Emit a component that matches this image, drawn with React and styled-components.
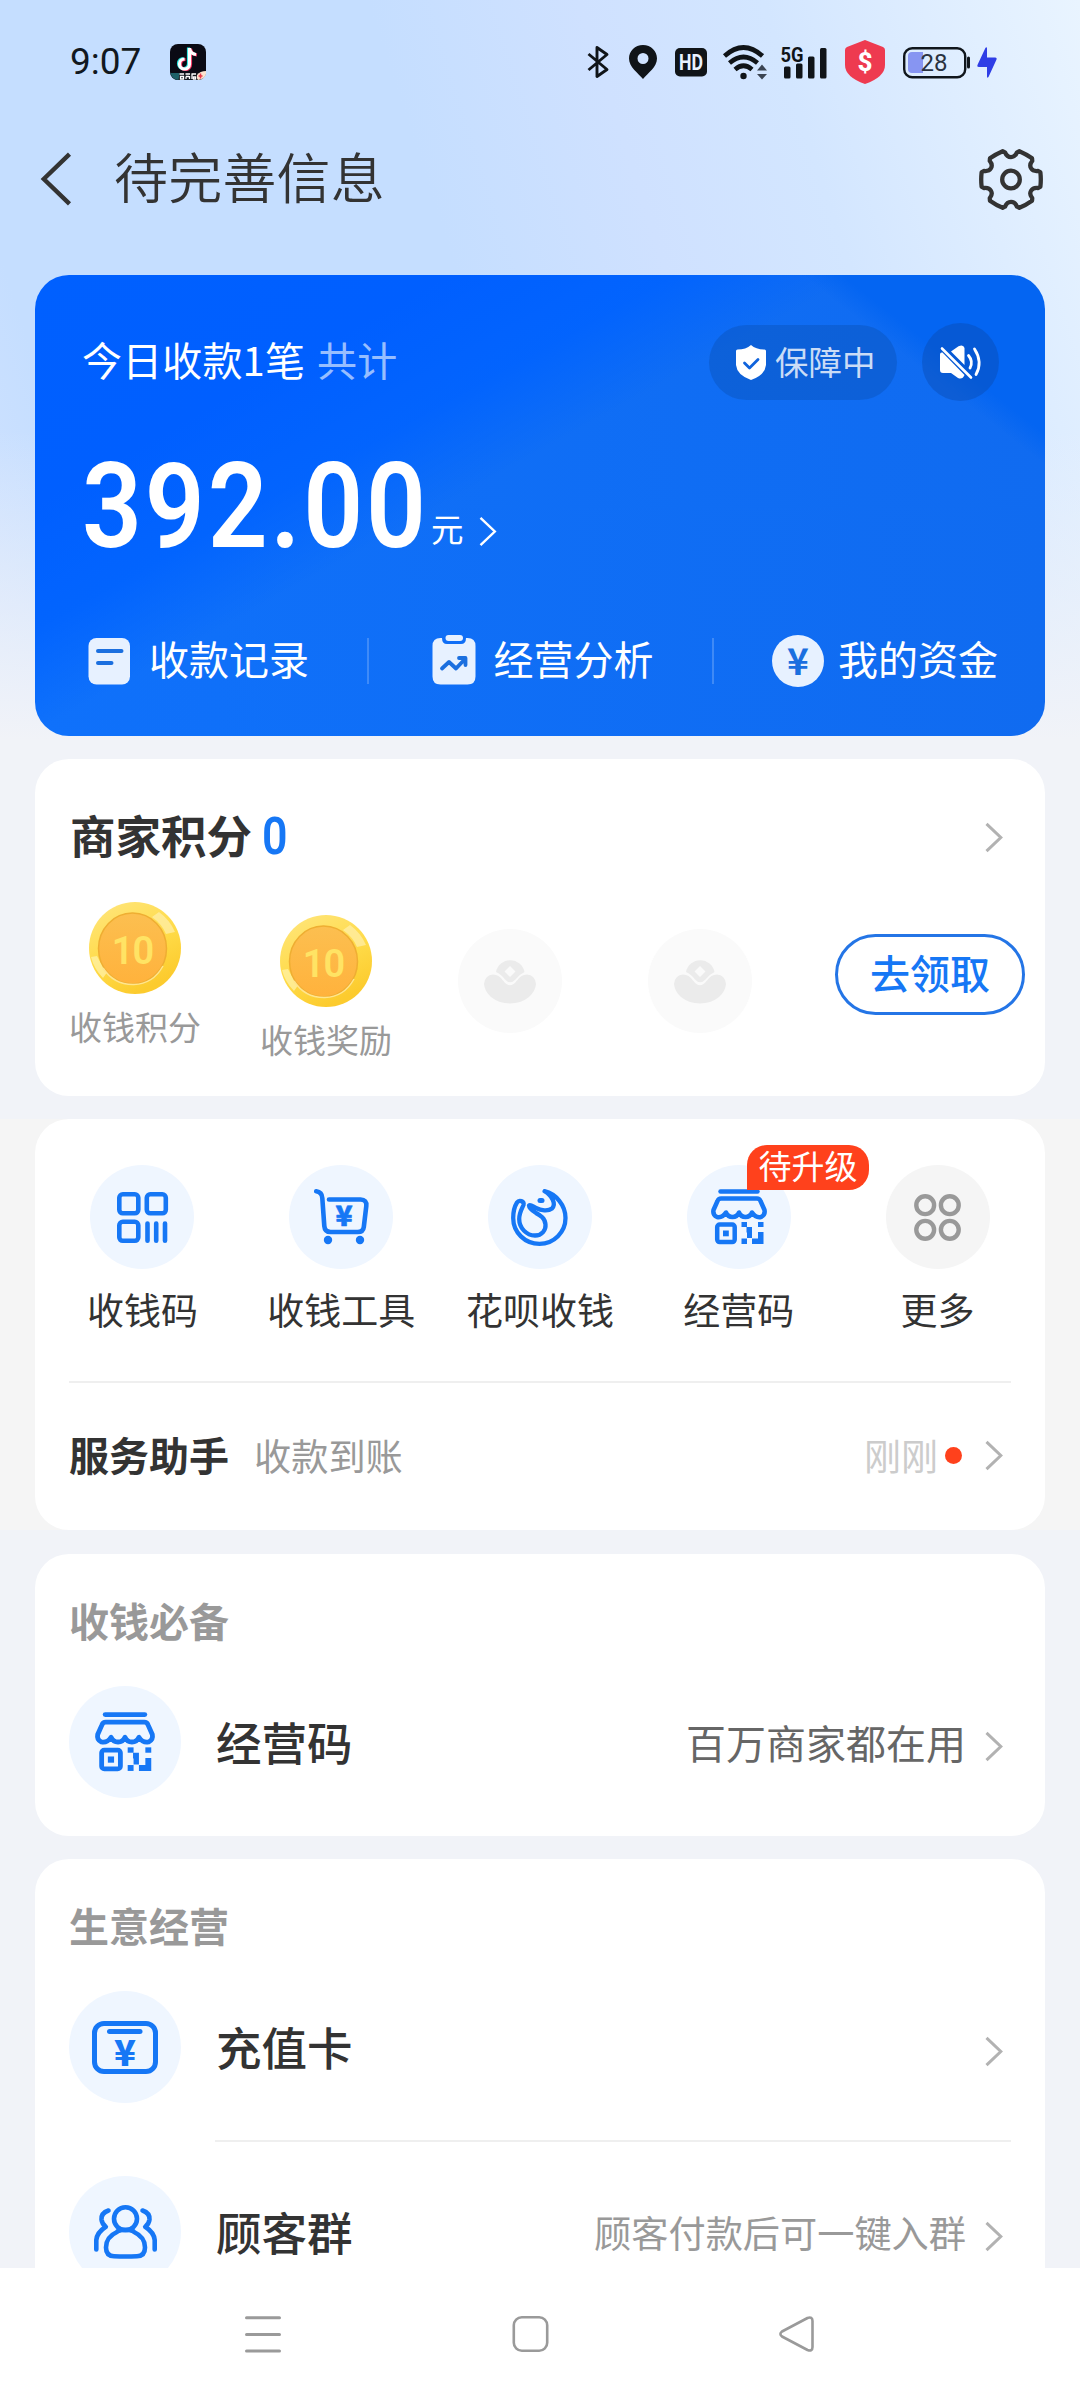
import React from "react";
import styled, { createGlobalStyle } from "styled-components";

const GlobalStyle = createGlobalStyle`
  * { box-sizing: border-box; }
  body { margin: 0; background: #fff; }
  svg { display: block; flex: none; overflow: visible; }
`;

const CJK = '"Noto Sans CJK SC", "Noto Sans", sans-serif';
const LATIN = 'Roboto, "Liberation Sans", sans-serif';
const BLUE = "#1677f5";

/* ---------- page frame ---------- */

const Screen = styled.div`
  width: 1080px;
  height: 2400px;
  display: flex;
  flex-direction: column;
  overflow: hidden;
  font-family: ${CJK};
  color: #333;
  white-space: nowrap;
`;

const Body = styled.main`
  height: 2268px;
  overflow: hidden;
  background:
    linear-gradient(180deg, rgba(241, 243, 248, 0) 430px, #f1f3f8 740px),
    linear-gradient(72deg, #d2e3ff 0, #c5deff 12%, #c5deff 46%, #cfe1ff 62%, #d3e6ff 76%, #e9f4ff 100%) 0 0 / 100% 740px no-repeat,
    #f1f3f8;
`;

const StatusBar = styled.div`
  height: 124px;
  padding: 0 83px 0 70px;
  display: flex;
  align-items: center;
`;

const Clock = styled.span`
  width: 100px;
  font: 400 37px/40px ${LATIN};
  color: #111820;
`;

const StatusIcons = styled.div`
  margin-left: auto;
  display: flex;
  align-items: center;
`;

const StatusItem = styled.span`
  display: flex;
  margin-left: ${(p) => p.$gap}px;
`;

const Header = styled.header`
  height: 110px;
  margin-bottom: 41px;
  padding: 0 37px 0 41px;
  display: flex;
  align-items: center;
`;

const Title = styled.h1`
  flex: 1;
  margin: 0 0 7px 43px;
  font-weight: 350;
  font-size: 54px;
  line-height: 56px;
  letter-spacing: 0.2px;
`;

/* ---------- cards ---------- */

const Section = styled.section`
  padding: 0 35px;
  margin-bottom: ${(p) => p.$gap || 23}px;
  background: ${(p) => (p.$plain ? "#f5f5f5" : "transparent")};
`;

const Card = styled.div`
  height: ${(p) => p.$h}px;
  border-radius: 34px;
  background: #fff;
  padding: ${(p) => p.$pad || "0"};
`;

const HeroCard = styled(Card)`
  padding: 48px 46px 0 47px;
  color: #fff;
  background:
    linear-gradient(218deg, #0465f2 0, #0465f2 125px, rgba(4, 101, 242, 0) 150px),
    linear-gradient(151deg, #0060ff 0, #005fff 200px, rgba(0, 98, 255, 0.85) 310px, rgba(10, 105, 250, 0) 400px),
    linear-gradient(90deg, #0f71fb, #106bf0);
`;

const HeroTop = styled.div`
  height: 78px;
  display: flex;
  align-items: center;
`;

const TodayText = styled.div`
  flex: 1;
  font-size: 40px;
  line-height: 40px;
  padding-bottom: 6px;
  letter-spacing: 0.15px;
  span { color: rgba(255, 255, 255, 0.6); margin-left: 12px; }
`;

const Guarantee = styled.div`
  width: 188px;
  height: 75px;
  border-radius: 38px;
  padding-left: 27px;
  display: flex;
  align-items: center;
  gap: 9px;
  background: rgba(10, 80, 180, 0.42);
  font-size: 33.5px;
  line-height: 34px;
  color: rgba(255, 255, 255, 0.78);
  span { margin-bottom: 2px; }
`;

const SoundButton = styled.div`
  width: 77px;
  height: 78px;
  margin-left: 25px;
  border-radius: 50%;
  display: flex;
  align-items: center;
  justify-content: center;
  background: rgba(10, 75, 175, 0.42);
`;

const AmountRow = styled.div`
  height: 84px;
  margin-top: 64px;
  display: flex;
`;

const Amount = styled.span`
  width: 349px;
  font: 600 118px/84px ${LATIN};
  letter-spacing: 3.2px;
  transform: scaleX(0.89);
  transform-origin: 0 50%;
`;

const Unit = styled.span`
  font-size: 32.5px;
  line-height: 32px;
  margin: 47px 15px 0 0;
`;

const ChevronSlot = styled.span`
  display: flex;
  margin-top: ${(p) => p.$top || 0}px;
  margin-left: ${(p) => p.$left || 0}px;
`;

const HeroLinks = styled.div`
  height: 52px;
  margin: 86px 1px 0 1px;
  display: flex;
  align-items: center;
  justify-content: space-between;
`;

const HeroLink = styled.div`
  display: flex;
  align-items: center;
  gap: 14px;
  font-size: 40px;
  line-height: 40px;
  span { margin-bottom: 6px; }
`;

const HeroDivider = styled.i`
  width: 2px;
  height: 46px;
  background: rgba(255, 255, 255, 0.2);
`;

/* ---------- points ---------- */

const PointsHead = styled.div`
  height: 46px;
  display: flex;
  align-items: center;
  padding-right: 22px;
`;

const PointsTitle = styled.h2`
  margin: 0 0 2px;
  font-size: 45.500px;
  line-height: 46px;
  font-weight: 700;
`;

const PointsValue = styled.span`
  flex: 1;
  margin: 4px 0 0 10px;
  font: 600 52px/46px ${LATIN};
  color: ${BLUE};
  transform: scaleX(0.86);
  transform-origin: 0 50%;
`;

const PointsRow = styled.div`
  margin-top: 44px;
  display: flex;
  align-items: flex-start;
`;

const CoinColumn = styled.div`
  width: 132px;
  margin: ${(p) => p.$top}px 60px 0 -1px;
  display: flex;
  flex-direction: column;
  align-items: center;
  gap: 15px;
  font-size: 33px;
  line-height: 34px;
  color: #999;
`;

const EmptySlot = styled.div`
  width: 104px;
  height: 104px;
  margin: 27px 0 0 ${(p) => p.$left}px;
  border-radius: 50%;
  background: #fafafa;
  display: flex;
  align-items: center;
  justify-content: center;
`;

const ClaimButton = styled.button`
  width: 190px;
  height: 81px;
  margin: 32px 0 0 83px;
  padding: 0 0 5px;
  border: 3px solid #2475e6;
  border-radius: 41px;
  background: #fff;
  color: ${BLUE};
  font: 500 40px/40px ${CJK};
`;

/* ---------- shortcuts ---------- */

const Shortcuts = styled.div`
  height: 262px;
  padding: 46px 8px 0 8px;
  display: grid;
  grid-template-columns: repeat(5, 1fr);
`;

const Shortcut = styled.div`
  position: relative;
  display: flex;
  flex-direction: column;
  align-items: center;
  gap: 21px;
  font-size: 37px;
  line-height: 38px;
`;

const Disc = styled.div`
  width: ${(p) => p.$size}px;
  height: ${(p) => p.$size}px;
  flex: none;
  border-radius: 50%;
  background: ${(p) => (p.$gray ? "#f5f5f5" : "#eff6ff")};
  display: flex;
  align-items: center;
  justify-content: center;
`;

const Badge = styled.span`
  position: absolute;
  left: 107.500px;
  top: -20px;
  width: 122px;
  height: 45px;
  border-radius: 20px 20px 20px 0;
  background: #ff411c;
  color: #fff;
  font-size: 33px;
  line-height: 41px;
  text-align: center;
`;

const Rule = styled.hr`
  height: 2px;
  border: 0;
  background: #efefef;
  margin: ${(p) => p.$m};
`;

const Assistant = styled.div`
  height: 145px;
  padding: 0 42px 0 34px;
  display: flex;
  align-items: center;
  line-height: 40px;
  b { font-size: 40px; padding-bottom: 3px; }
  em { flex: 1; font-style: normal; font-size: 37.200px; color: #999; margin-left: 25px; padding-bottom: 1px; }
  time { font-size: 37px; color: #ccc; padding-bottom: 1px; }
`;

const RedDot = styled.i`
  width: 17px;
  height: 17px;
  margin: 0 23px 0 7px;
  border-radius: 50%;
  background: #ff411c;
`;

/* ---------- lists ---------- */

const ListHeading = styled.h3`
  margin: 0 0 46px;
  font-size: 40px;
  line-height: 40px;
  font-weight: 700;
  color: #999;
`;

const ListRow = styled.div`
  height: 112px;
  padding-right: 7px;
  display: flex;
  align-items: center;
`;

const RowName = styled.span`
  flex: 1;
  margin: 0 0 3px 35px;
  font-size: 45.500px;
  line-height: 46px;
  font-weight: 500;
`;

const RowNote = styled.span`
  font-size: ${(p) => p.$size}px;
  line-height: 40px;
  color: ${(p) => p.$color};
`;

const NavBar = styled.nav`
  height: 132px;
  padding: 0 266px 0 245px;
  display: flex;
  align-items: center;
  justify-content: space-between;
  background: #fff;
`;

/* ---------- icons ---------- */

const Chevron = ({ color = "#b2b2b2", weight = 3 }) => (
  <svg width="18" height="29" viewBox="0 0 18 29" fill="none" stroke={color} strokeWidth={weight}>
    <path d="M1.500 0.800 15.800 14.500 1.500 28.200" />
  </svg>
);

const BackIcon = () => (
  <svg width="30" height="52" viewBox="0 0 30 52" fill="none" stroke="#333" strokeWidth="4.400">
    <path d="M28.500 1.200 2.800 26 28.500 50.800" />
  </svg>
);

const gearPath = () => {
  const point = (deg, r) => {
    const a = (deg * Math.PI) / 180;
    return `${(32 + r * Math.cos(a)).toFixed(2)} ${(30.5 + r * 0.97 * Math.sin(a)).toFixed(2)}`;
  };
  let d = "";
  for (let k = 0; k < 6; k++) {
    const c = 60 * k;
    d += `${k ? "L" : "M"}${point(c - 14, 30.3)} Q${point(c, 30.2)} ${point(c + 14, 30.3)} `;
    d += `L${point(c + 18, 28.6)} C${point(c + 21, 21.8)} ${point(c + 39, 21.8)} ${point(c + 42, 28.6)} `;
  }
  return d + "Z";
};

const GearIcon = () => (
  <svg width="64" height="61" viewBox="0 0 64 61" fill="none" stroke="#333" strokeWidth="4.300" strokeLinejoin="round">
    <path d={gearPath()} />
    <circle cx="32" cy="30.500" r="8.800" />
  </svg>
);

const MusicAppIcon = () => (
  <svg width="36" height="36" viewBox="0 0 36 36">
    <rect width="36" height="36" rx="8" fill="#0a0a14" />
    <g fill="none" strokeWidth="3.200">
      <path d="M18.500 3.500V19.500a5 5 0 1 1-5-5M18.500 4c.6 3.800 3 5.500 6.500 6" stroke="#25e5e0" />
      <path d="M20.500 4.500V20.500a5 5 0 1 1-5-5M20.500 5c.6 3.800 3 5.500 6.500 6" stroke="#f5305e" />
      <path d="M19.500 4V20a5 5 0 1 1-5-5M19.500 4.500c.6 3.800 3 5.500 6.500 6" stroke="#fff" />
    </g>
    <path d="M1 29h33.500Q34 34 29 36H8Q2 35 1 29Z" fill="#15191f" />
    <path d="M.5 29h9l-1 7Q1.500 35 .5 29Z" fill="#1d6068" />
    <path d="M27 31q3-4 9-4v3q-1 5-8 6-2-2-1-5Z" fill="#fde3cf" />
    <path d="M30.500 29.500v5M28.500 32h4" stroke="#e8374a" strokeWidth="1.500" />
    <path d="M9.500 30h4.500M10.500 32.500v2.500h3v-2.500zM15.500 30h4.500M16 32.500v2.500M19.500 32v3M16 32.500h3M21.500 30h4.500M22 30v5M23.500 33h2v2h-2z" fill="none" stroke="#fff" strokeWidth="1.300" />
  </svg>
);

const BluetoothIcon = () => (
  <svg width="22" height="34" viewBox="0 0 22 34" fill="none" stroke="#101418" strokeWidth="2.900">
    <path d="M1.500 9 20 24.500 10 31.500V2.500l10 7L1.500 25" strokeLinejoin="round" />
  </svg>
);

const PinIcon = () => (
  <svg width="28" height="34" viewBox="0 0 28 34">
    <path fillRule="evenodd" fill="#101418" d="M14 0C6 0 0 6 0 13.500 0 22 9 28 14 34 19 28 28 22 28 13.500 28 6 22 0 14 0Zm0 8a5.500 5.500 0 1 1 0 11 5.500 5.500 0 0 1 0-11Z" />
  </svg>
);

const HdIcon = () => (
  <svg width="32" height="29" viewBox="0 0 32 29">
    <rect width="32" height="28.500" rx="5" fill="#101418" />
    <text x="16" y="22" textAnchor="middle" fill="#e8f2ff" fontFamily="Roboto" fontWeight="700" fontSize="22" textLength="24" lengthAdjust="spacingAndGlyphs">HD</text>
  </svg>
);

const WifiIcon = () => (
  <svg width="44" height="35" viewBox="0 0 44 35" fill="none" stroke="#101418" strokeWidth="4.600">
    <path d="M1.500 11Q20.500-6 39.500 11M6.500 18Q20.500 6 34.500 18M12 24.500Q20.500 17 29 24.500" />
    <circle cx="20.500" cy="31" r="3.200" fill="#101418" stroke="none" />
    <path d="M34 25.500l5-6 5 6zM34 29l5 5.500 5-5.500z" fill="#3b4452" stroke="none" />
  </svg>
);

const SignalIcon = () => (
  <svg width="46" height="33" viewBox="0 0 46 33">
    <text x="-0.500" y="15.500" fill="#101418" fontFamily="Roboto" fontWeight="700" fontSize="20.500" textLength="23" lengthAdjust="spacingAndGlyphs">5G</text>
    <g fill="#101418">
      <rect x="3" y="20.500" width="6.500" height="12" rx="1.500" />
      <rect x="15" y="17.500" width="6.500" height="15" rx="1.500" />
      <rect x="27" y="10.500" width="6.500" height="22" rx="1.500" />
      <rect x="39" y="2" width="6.500" height="30.500" rx="1.500" />
    </g>
  </svg>
);

const MoneyShieldIcon = () => (
  <svg width="40" height="44" viewBox="0 0 40 44">
    <path d="M20 0 38 7q2 .8 2 3V25Q40 37 20 44 0 37 0 25V10Q0 7.800 2 7Z" fill="#ee3a50" />
    <text x="20" y="31" textAnchor="middle" fill="#fff" fontFamily="Roboto" fontWeight="800" fontSize="26">$</text>
  </svg>
);

const BatteryIcon = () => (
  <svg width="67" height="31" viewBox="0 0 67 31">
    <rect x="1.200" y="1.200" width="61" height="29" rx="8" fill="none" stroke="#10161c" strokeWidth="2.400" />
    <path d="M9 5H20V26H9Q5 26 5 22V9Q5 5 9 5Z" fill="#8795f2" />
    <rect x="64" y="9.500" width="3" height="12" rx="1.500" fill="#10161c" />
    <text x="31" y="24" textAnchor="middle" fill="#2a3240" fontFamily="Roboto" fontSize="24">28</text>
  </svg>
);

const BoltIcon = () => (
  <svg width="20" height="31" viewBox="0 0 20 31">
    <path d="M8.500.8Q10-.5 10 1.500V10.500H18Q20.500 10.500 19.300 13L11.500 30Q10 31.500 10 29.500V20H2Q-.5 20 .7 17.500Z" fill="#2f3ee6" />
  </svg>
);

const CheckShieldIcon = () => (
  <svg width="30" height="35" viewBox="0 0 30 35">
    <path d="M15 0Q20 4.500 28.500 4.500 30 4.500 30 6V20Q29 30 15 35 1 30 0 20V6Q0 4.500 1.500 4.500 10 4.500 15 0Z" fill="#fff" />
    <path d="M8.500 18 13.500 23 22 14.500" fill="none" stroke="#0f63dc" strokeWidth="2.800" strokeLinecap="round" strokeLinejoin="round" />
  </svg>
);

const MutedIcon = () => (
  <svg width="41" height="34" viewBox="0 0 41 34">
    <path d="M2.500 7.500 24.500 30Q22.500 35 18 33L11 28H3Q0 28 0 25V9.500Q0 7 2.500 7.500Z" fill="#fff" />
    <path d="M11 6.500 18.500 1.200Q23.500-1 24.500 3V20Z" fill="#fff" />
    <path d="M2 3.500 31 32.500" stroke="#fff" strokeWidth="2.600" strokeLinecap="round" />
    <path d="M28.500 10.500Q33.500 16.500 30 23M34.500 4Q43 17 36 29.500" fill="none" stroke="#fff" strokeWidth="2.800" strokeLinecap="round" />
  </svg>
);

const RecordIcon = () => (
  <svg width="52" height="52" viewBox="0 0 52 52">
    <rect x="5.500" y="3" width="41.500" height="46.500" rx="8" fill="#e7f1ff" />
    <path d="M15 16H38.500M15 28H28.500" stroke="#1b6fdf" strokeWidth="4" strokeLinecap="round" />
  </svg>
);

const AnalysisIcon = () => (
  <svg width="52" height="52" viewBox="0 0 52 52">
    <path d="M12.500 3H14q0 6 5 6H33q5 0 5-6H39.500q8 0 8 8V41.500q0 8-8 8H12.500q-8 0-8-8V11q0-8 8-8Z" fill="#e7f1ff" />
    <rect x="17.500" y="0" width="17.500" height="6" rx="3" fill="#e7f1ff" />
    <path d="M14 33.500 21 27 28 33.500 37 24M31 23H37.500V30" fill="none" stroke="#1b6fdf" strokeWidth="3.800" strokeLinecap="round" strokeLinejoin="round" />
  </svg>
);

const FundsIcon = () => (
  <svg width="52" height="52" viewBox="0 0 52 52">
    <circle cx="26" cy="26" r="26" fill="#e7f1ff" />
    <text x="26" y="40" textAnchor="middle" fill="#1b6fdf" fontFamily="Noto Sans CJK SC" fontWeight="700" fontSize="37">¥</text>
  </svg>
);

const Coin = () => (
  <svg width="92" height="92" viewBox="0 0 92 92">
    <defs>
      <linearGradient id="rim" x1="0" y1="0" x2="0.500" y2="1">
        <stop offset="0" stopColor="#ffe680" />
        <stop offset="0.600" stopColor="#ffdb48" />
        <stop offset="1" stopColor="#fccb2e" />
      </linearGradient>
      <linearGradient id="face" x1="0" y1="0" x2="0" y2="1">
        <stop offset="0" stopColor="#fcbf50" />
        <stop offset="1" stopColor="#ffb23c" />
      </linearGradient>
    </defs>
    <circle cx="46" cy="46" r="46" fill="url(#rim)" />
    <path d="M70 10Q81 18 86 30L77 32Q73 22 63 15Z" fill="#fff0ae" opacity="0.700" />
    <path d="M2 55Q5 67 14 76L19 69Q12 63 8 54Z" fill="#fff3ae" opacity="0.700" />
    <ellipse cx="43.500" cy="46.500" rx="34" ry="35.500" fill="url(#face)" stroke="#efae32" strokeWidth="1.500" />
    <path d="M14 66Q25 83 45 82.500 64 82 74 64" fill="none" stroke="#ffe58e" strokeWidth="1.500" />
    <text x="43.500" y="61.500" textAnchor="middle" fill="#ffe364" fontFamily="Roboto" fontWeight="600" fontSize="38" letterSpacing="-1">10</text>
  </svg>
);

const IngotIcon = () => (
  <svg width="52" height="46" viewBox="0 0 52 46" fill="#ebebeb">
    <path fillRule="evenodd" d="M12 14A14.500 14.500 0 0 1 40.500 14Q36 16 31.500 21.500 26 27 21 21.500 17 16 12 14ZM26 8 20.500 13.500 26 19 31.500 13.500Z" />
    <path d="M0 26Q1 17 9 16.500 15 16.500 19 22.500 26 32 33 22.500 37 16.500 43 16.500 51 17 52 26 51.500 33 45 39 37 45.500 26 45.500 15 45.500 7 39 .5 33 0 26Z" />
  </svg>
);

const CodeIcon = () => (
  <svg width="51" height="51" viewBox="0 0 51 51" fill="none" stroke={BLUE} strokeWidth="4.600" strokeLinecap="round">
    <rect x="2.300" y="2.300" width="19" height="19" rx="3.500" />
    <rect x="29.800" y="2.300" width="19" height="19" rx="3.500" />
    <rect x="2.300" y="29.800" width="19" height="19" rx="3.500" />
    <path d="M30.500 31.500V48.700M39.200 31.500V48.700M48 31.500V48.700" />
  </svg>
);

const CartIcon = () => (
  <svg width="55" height="56" viewBox="0 0 55 56" fill="none" stroke={BLUE} strokeWidth="4.600" strokeLinecap="round" strokeLinejoin="round">
    <path d="M2.200 2.200Q8 3 8.300 9L10.300 37Q10.800 43 16.500 43H43.500Q49.300 43 49.800 38L52.300 17Q53 10.800 46.500 10.500H15" />
    <circle cx="14" cy="51" r="4.200" fill={BLUE} stroke="none" />
    <circle cx="46" cy="51" r="4.200" fill={BLUE} stroke="none" />
    <text x="30" y="36.500" textAnchor="middle" fill={BLUE} stroke={BLUE} strokeWidth="0.600" fontFamily="Noto Sans CJK SC" fontWeight="900" fontSize="28">¥</text>
  </svg>
);

const HuabeiIcon = () => (
  <svg width="57" height="57" viewBox="0 0 57 57" fill="none" stroke={BLUE} strokeWidth="4.300" strokeLinecap="round" strokeLinejoin="round">
    <path d="M33.500 2.200C45 5 54.500 16 54.500 29 54.500 43 43 54.800 28.500 54.800 14 54.800 2.200 43.500 2.200 29 2.200 23 3.800 17 6 13.500 8 10.500 13.500 12 12.500 16 10.500 20.500 8.200 24 8.200 30 8.200 39 15.500 46.500 24 46.500 31 46.500 35 41 34.500 35.500 34 29 29.500 26.500 25 24 21 21.500 18 19.500 18 16.500 19.500 15 22 17.500 25 19 30 21.500 37 22.500 41 19.500 45.500 15 41 6.500 33.500 2.200Z" />
    <path d="M29 11.500H31" strokeWidth="5" />
  </svg>
);

const ShopIcon = ({ size = 56 }) => (
  <svg width={size} height={size} viewBox="0 0 56 56" fill="none" stroke={BLUE} strokeWidth="4.500" strokeLinecap="round" strokeLinejoin="round">
    <path d="M9.500 2.400H46.500" />
    <path d="M10 9.500H46Q48.500 9.500 49.500 12L53.500 21Q54.500 26 50 28 44.500 29 41 23.500 39 28 34.500 28 30 28 28 23.500 26 28 21.500 28 17 28 15 23.500 11.500 29 6 28 1.500 26 2.500 21L6.500 12Q7.500 9.500 10 9.500Z" />
    <rect x="6.200" y="35.600" width="17.500" height="17.500" rx="2.500" />
    <g fill={BLUE} stroke="none">
      <rect x="12" y="41.500" width="5.800" height="5.800" />
      <rect x="30.500" y="33" width="5.500" height="5" />
      <path d="M35.500 38H41V49H36V43.500H35.500Z" />
      <rect x="30.500" y="49.500" width="5.500" height="5.500" />
      <rect x="47" y="33" width="5.500" height="5" />
      <path d="M47 43H52.500V55H41V49.500H47Z" />
    </g>
  </svg>
);

const MoreIcon = () => (
  <svg width="47" height="47" viewBox="0 0 47 47" fill="none" stroke="#999" strokeWidth="4.400">
    <circle cx="11.200" cy="11.200" r="8.900" />
    <circle cx="35.800" cy="11.200" r="8.900" />
    <circle cx="11.200" cy="35.800" r="8.900" />
    <circle cx="35.800" cy="35.800" r="8.900" />
  </svg>
);

const RechargeIcon = () => (
  <svg width="66" height="53" viewBox="0 0 66 53" fill="none" stroke={BLUE} strokeWidth="5" strokeLinecap="round">
    <rect x="2.500" y="2.500" width="61" height="48" rx="9.500" />
    <path d="M17.500 10.500H48" />
    <text x="33" y="44.500" textAnchor="middle" fill={BLUE} stroke="none" fontFamily="Noto Sans CJK SC" fontWeight="900" fontSize="36">¥</text>
  </svg>
);

const PeopleIcon = () => (
  <svg width="63" height="54" viewBox="0 0 63 54" fill="none" stroke={BLUE} strokeWidth="4.600" strokeLinecap="round" strokeLinejoin="round">
    <circle cx="31.500" cy="13.700" r="11.500" />
    <path d="M23 27Q12 32 12 42.500 12 51 20 51.300 31.500 51.800 43 51.300 51 51 51 42.500 51 32 40 27" />
    <path d="M14.500 5.500Q7 8 7.500 14.500 8 19 11.800 21.800 3 27.500 2.300 35V44.500" />
    <path d="M48.500 5.500Q56 8 55.500 14.500 55 19 51.200 21.800 60 27.500 60.700 35V44.500" />
    <path d="M24 26Q31.500 23.500 39 26" />
  </svg>
);

const MenuIcon = () => (
  <svg width="36" height="37" viewBox="0 0 36 37" stroke="#9a9a9a" strokeWidth="3" strokeLinecap="round">
    <path d="M1.500 1.800H34.500M1.500 18.500H34.500M1.500 35H34.500" />
  </svg>
);

const HomeIcon = () => (
  <svg width="36" height="36" viewBox="0 0 36 36" fill="none" stroke="#9a9a9a" strokeWidth="2.600">
    <rect x="1.800" y="1.300" width="33.400" height="33.400" rx="8" />
  </svg>
);

const NavBackIcon = () => (
  <svg width="35" height="36" viewBox="0 0 35 36" fill="none" stroke="#9a9a9a" strokeWidth="2.600" strokeLinejoin="round">
    <path d="M3 15.500 28.500 2Q33.500.2 33.500 5V31Q33.500 35.800 28.500 34L3 20.500Q-.2 18 3 15.500Z" />
  </svg>
);

/* ---------- data ---------- */

const heroLinks = [
  { label: "收款记录", Icon: RecordIcon },
  { label: "经营分析", Icon: AnalysisIcon },
  { label: "我的资金", Icon: FundsIcon },
];

const shortcuts = [
  { label: "收钱码", Icon: CodeIcon },
  { label: "收钱工具", Icon: CartIcon },
  { label: "花呗收钱", Icon: HuabeiIcon },
  { label: "经营码", Icon: ShopIcon, badge: "待升级" },
  { label: "更多", Icon: MoreIcon, gray: true },
];

const ServiceRow = ({ icon, name, note, noteSize = 40, noteColor = "#666" }) => (
  <ListRow>
    <Disc $size={112}>{icon}</Disc>
    <RowName>{name}</RowName>
    {note && <RowNote $size={noteSize} $color={noteColor}>{note}</RowNote>}
    <ChevronSlot $top={9} $left={19}><Chevron /></ChevronSlot>
  </ListRow>
);

export default function App() {
  return (
    <Screen>
      <GlobalStyle />
      <Body>
        <StatusBar>
          <Clock>9:07</Clock>
          <MusicAppIcon />
          <StatusIcons>
            <StatusItem $gap={0}><BluetoothIcon /></StatusItem>
            <StatusItem $gap={20}><PinIcon /></StatusItem>
            <StatusItem $gap={18}><HdIcon /></StatusItem>
            <StatusItem $gap={16}><WifiIcon /></StatusItem>
            <StatusItem $gap={14}><SignalIcon /></StatusItem>
            <StatusItem $gap={18}><MoneyShieldIcon /></StatusItem>
            <StatusItem $gap={18}><BatteryIcon /></StatusItem>
            <StatusItem $gap={7}><BoltIcon /></StatusItem>
          </StatusIcons>
        </StatusBar>

        <Header>
          <BackIcon />
          <Title>待完善信息</Title>
          <GearIcon />
        </Header>

        <Section>
          <HeroCard $h={461}>
            <HeroTop>
              <TodayText>今日收款1笔<span>共计</span></TodayText>
              <Guarantee><CheckShieldIcon /><span>保障中</span></Guarantee>
              <SoundButton><MutedIcon /></SoundButton>
            </HeroTop>
            <AmountRow>
              <Amount>392.00</Amount>
              <Unit>元</Unit>
              <ChevronSlot $top={52}><Chevron color="#fff" weight={2.4} /></ChevronSlot>
            </AmountRow>
            <HeroLinks>
              {heroLinks.map(({ label, Icon }, i) => (
                <React.Fragment key={label}>
                  {i > 0 && <HeroDivider />}
                  <HeroLink><Icon /><span>{label}</span></HeroLink>
                </React.Fragment>
              ))}
            </HeroLinks>
          </HeroCard>
        </Section>

        <Section>
          <Card $h={337} $pad="53px 20px 0 35px">
            <PointsHead>
              <PointsTitle>商家积分</PointsTitle>
              <PointsValue>0</PointsValue>
              <ChevronSlot $top={5}><Chevron /></ChevronSlot>
            </PointsHead>
            <PointsRow>
              <CoinColumn $top={0}><Coin />收钱积分</CoinColumn>
              <CoinColumn $top={13}><Coin />收钱奖励</CoinColumn>
              <EmptySlot $left={6}><IngotIcon /></EmptySlot>
              <EmptySlot $left={86}><IngotIcon /></EmptySlot>
              <ClaimButton>去领取</ClaimButton>
            </PointsRow>
          </Card>
        </Section>

        <Section $plain $gap={24}>
          <Card $h={411}>
            <Shortcuts>
              {shortcuts.map(({ label, Icon, badge, gray }) => (
                <Shortcut key={label}>
                  <Disc $size={104} $gray={gray}><Icon /></Disc>
                  {label}
                  {badge && <Badge>{badge}</Badge>}
                </Shortcut>
              ))}
            </Shortcuts>
            <Rule $m="0 34px" />
            <Assistant>
              <b>服务助手</b>
              <em>收款到账</em>
              <time>刚刚</time>
              <RedDot />
              <Chevron />
            </Assistant>
          </Card>
        </Section>

        <Section>
          <Card $h={282} $pad="46px 35px 0 34px">
            <ListHeading>收钱必备</ListHeading>
            <ServiceRow icon={<ShopIcon size={60} />} name="经营码" note="百万商家都在用" />
          </Card>
        </Section>

        <Section>
          <Card $h={480} $pad="46px 35px 0 34px">
            <ListHeading>生意经营</ListHeading>
            <ServiceRow icon={<RechargeIcon />} name="充值卡" />
            <Rule $m="37px -1px 34px 146px" />
            <ServiceRow icon={<PeopleIcon />} name="顾客群" note="顾客付款后可一键入群" noteSize={37.2} noteColor="#999" />
          </Card>
        </Section>
      </Body>

      <NavBar>
        <MenuIcon />
        <HomeIcon />
        <NavBackIcon />
      </NavBar>
    </Screen>
  );
}
